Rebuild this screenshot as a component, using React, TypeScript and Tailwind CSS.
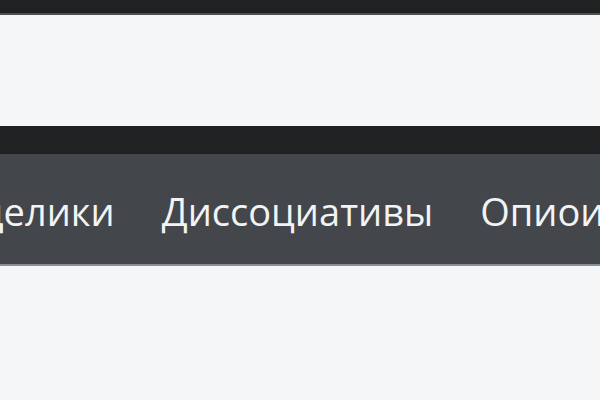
const categories = ['Психоделики', 'Диссоциативы', 'Опиоиды', 'Стимуляторы'];

export default function App() {
  return (
    <div className="w-[600px] h-[400px] overflow-hidden bg-[#f5f6f8] flex flex-col font-['Open_Sans',sans-serif]">
      {/* Top header strip */}
      <div className="h-[13px] bg-[#1f2123] shrink-0" />
      <div className="h-[2px] bg-[#4b5052] shrink-0" />

      {/* Page area */}
      <div className="h-[111px] shrink-0 bg-[#f5f6f8]" />

      {/* Menu */}
      <div className="h-[28px] bg-[#1f2123] shrink-0" />
      <nav className="h-[112px] shrink-0 bg-[#43464a] border-b-2 border-[#8c8f93] flex items-center overflow-hidden">
        <ul className="flex items-center gap-[47px] -ml-[131px] mt-[4px] whitespace-nowrap text-[38px] text-[#f2f3f5] leading-none">
          {categories.map((c) => (
            <li key={c}>{c}</li>
          ))}
        </ul>
      </nav>

      <div className="flex-1 bg-[#f5f6f8]" />
    </div>
  );
}
